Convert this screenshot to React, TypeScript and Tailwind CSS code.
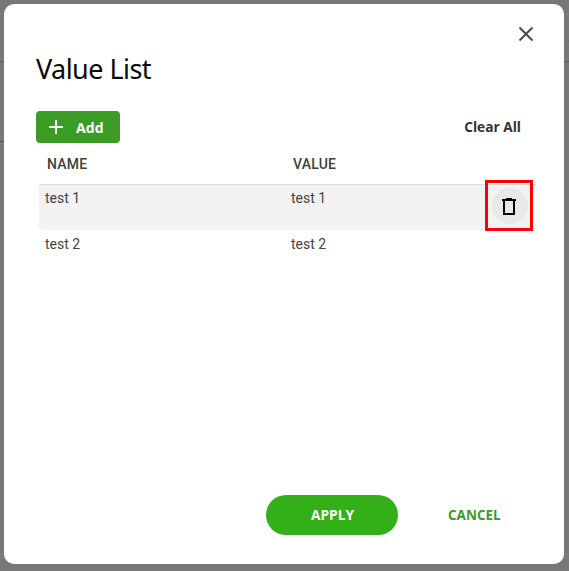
import React from "react";

function Row({ name, value, active }: { name: string; value: string; active?: boolean }) {
  return (
    <div className={`relative flex text-[14px] leading-[18px] text-[#444] pl-[6px] ${active ? "h-[45px] pt-[4px] rounded-bl-[4px] bg-[#f2f2f2]" : "h-[46px] pt-[5px]"}`}>
      <div className="w-[246px]">{name}</div>
      <div>{value}</div>
      {active && (
        <div className="absolute left-[446px] top-[-5px] flex h-[51px] w-[48px] items-center justify-center border-[3px] border-[#fe0000]">
          <div className="ml-[1px] flex h-[36px] w-[36px] items-center justify-center rounded-full bg-[#e8e8e8]">
            <svg width="14" height="18" viewBox="0 0 14 18" fill="none" stroke="#000" strokeWidth="2" className="mr-[1px]">
              <path d="M0 3h14" />
              <path d="M4 1.5h6" strokeWidth="1" />
              <path d="M2 4v13h10V4" />
            </svg>
          </div>
        </div>
      )}
    </div>
  );
}

export default function App() {
  return (
    <div className="relative h-[571px] w-[569px] overflow-hidden bg-[#787878] p-[4px_5px_7px_4px] [font-family:Roboto,sans-serif]">
      <div className="absolute left-0 top-[40px] h-[1px] w-full bg-[#707070]" />
      <div className="absolute left-0 top-[61px] h-[1px] w-full bg-[#5e5e5e]" />
      <div className="absolute left-0 top-[141px] h-[1px] w-[4px] bg-[#5a4a72]" />
      <div className="relative flex h-[560px] w-[560px] flex-col rounded-[10px] bg-white pl-[32px] pr-[31px]">
        <div className="flex justify-end pt-[19px]">
          <svg width="22" height="22" viewBox="0 0 22 22" fill="none" stroke="#4a4a4a" strokeWidth="2" className="mr-[-4px]">
            <path d="M4.5 4.5l13 13M17.5 4.5l-13 13" />
          </svg>
        </div>
        <h1 className="mt-[5px] text-[27px] leading-[38px] tracking-[-0.55px] text-[#0a0a0a] [font-family:'Noto_Sans',sans-serif]">Value List</h1>
        <div className="mt-[23px] flex items-center justify-between">
          <button className="flex h-[32px] w-[84px] items-center rounded-[4px] bg-[#3a9c25] pl-[13px] text-white">
            <svg width="14" height="14" viewBox="0 0 14 14" stroke="#fff" strokeWidth="2" fill="none"><path d="M7 0v14M0 7h14" /></svg>
            <span className="ml-[13px] text-[14px] font-bold tracking-[0.1px] [font-family:'Open_Sans',sans-serif]">Add</span>
          </button>
          <button className="mr-[12px] text-[13.7px] font-bold text-[#333] [font-family:'Open_Sans',sans-serif]">Clear All</button>
        </div>
        <div className="ml-[3px] mr-[-3px] flex h-[42px] items-center border-b border-[#dcdcdc] pl-[8px] pt-[2px] text-[14px] font-medium tracking-[0.2px] text-[#3f3f3f]">
          <div className="w-[246px]">NAME</div>
          <div>VALUE</div>
        </div>
        <div className="ml-[3px]">
          <Row name="test 1" value="test 1" active />
          <Row name="test 2" value="test 2" />
        </div>
        <div className="mt-auto mb-[29px] flex items-center">
          <button className="ml-[230px] h-[40px] w-[132px] rounded-full bg-[#33b018] pl-[1px] text-[13.7px] font-bold text-white [font-family:'Open_Sans',sans-serif]">APPLY</button>
          <button className="ml-[50px] text-[13.5px] font-bold text-[#3a9c25] [font-family:'Open_Sans',sans-serif]">CANCEL</button>
        </div>
      </div>
    </div>
  );
}
